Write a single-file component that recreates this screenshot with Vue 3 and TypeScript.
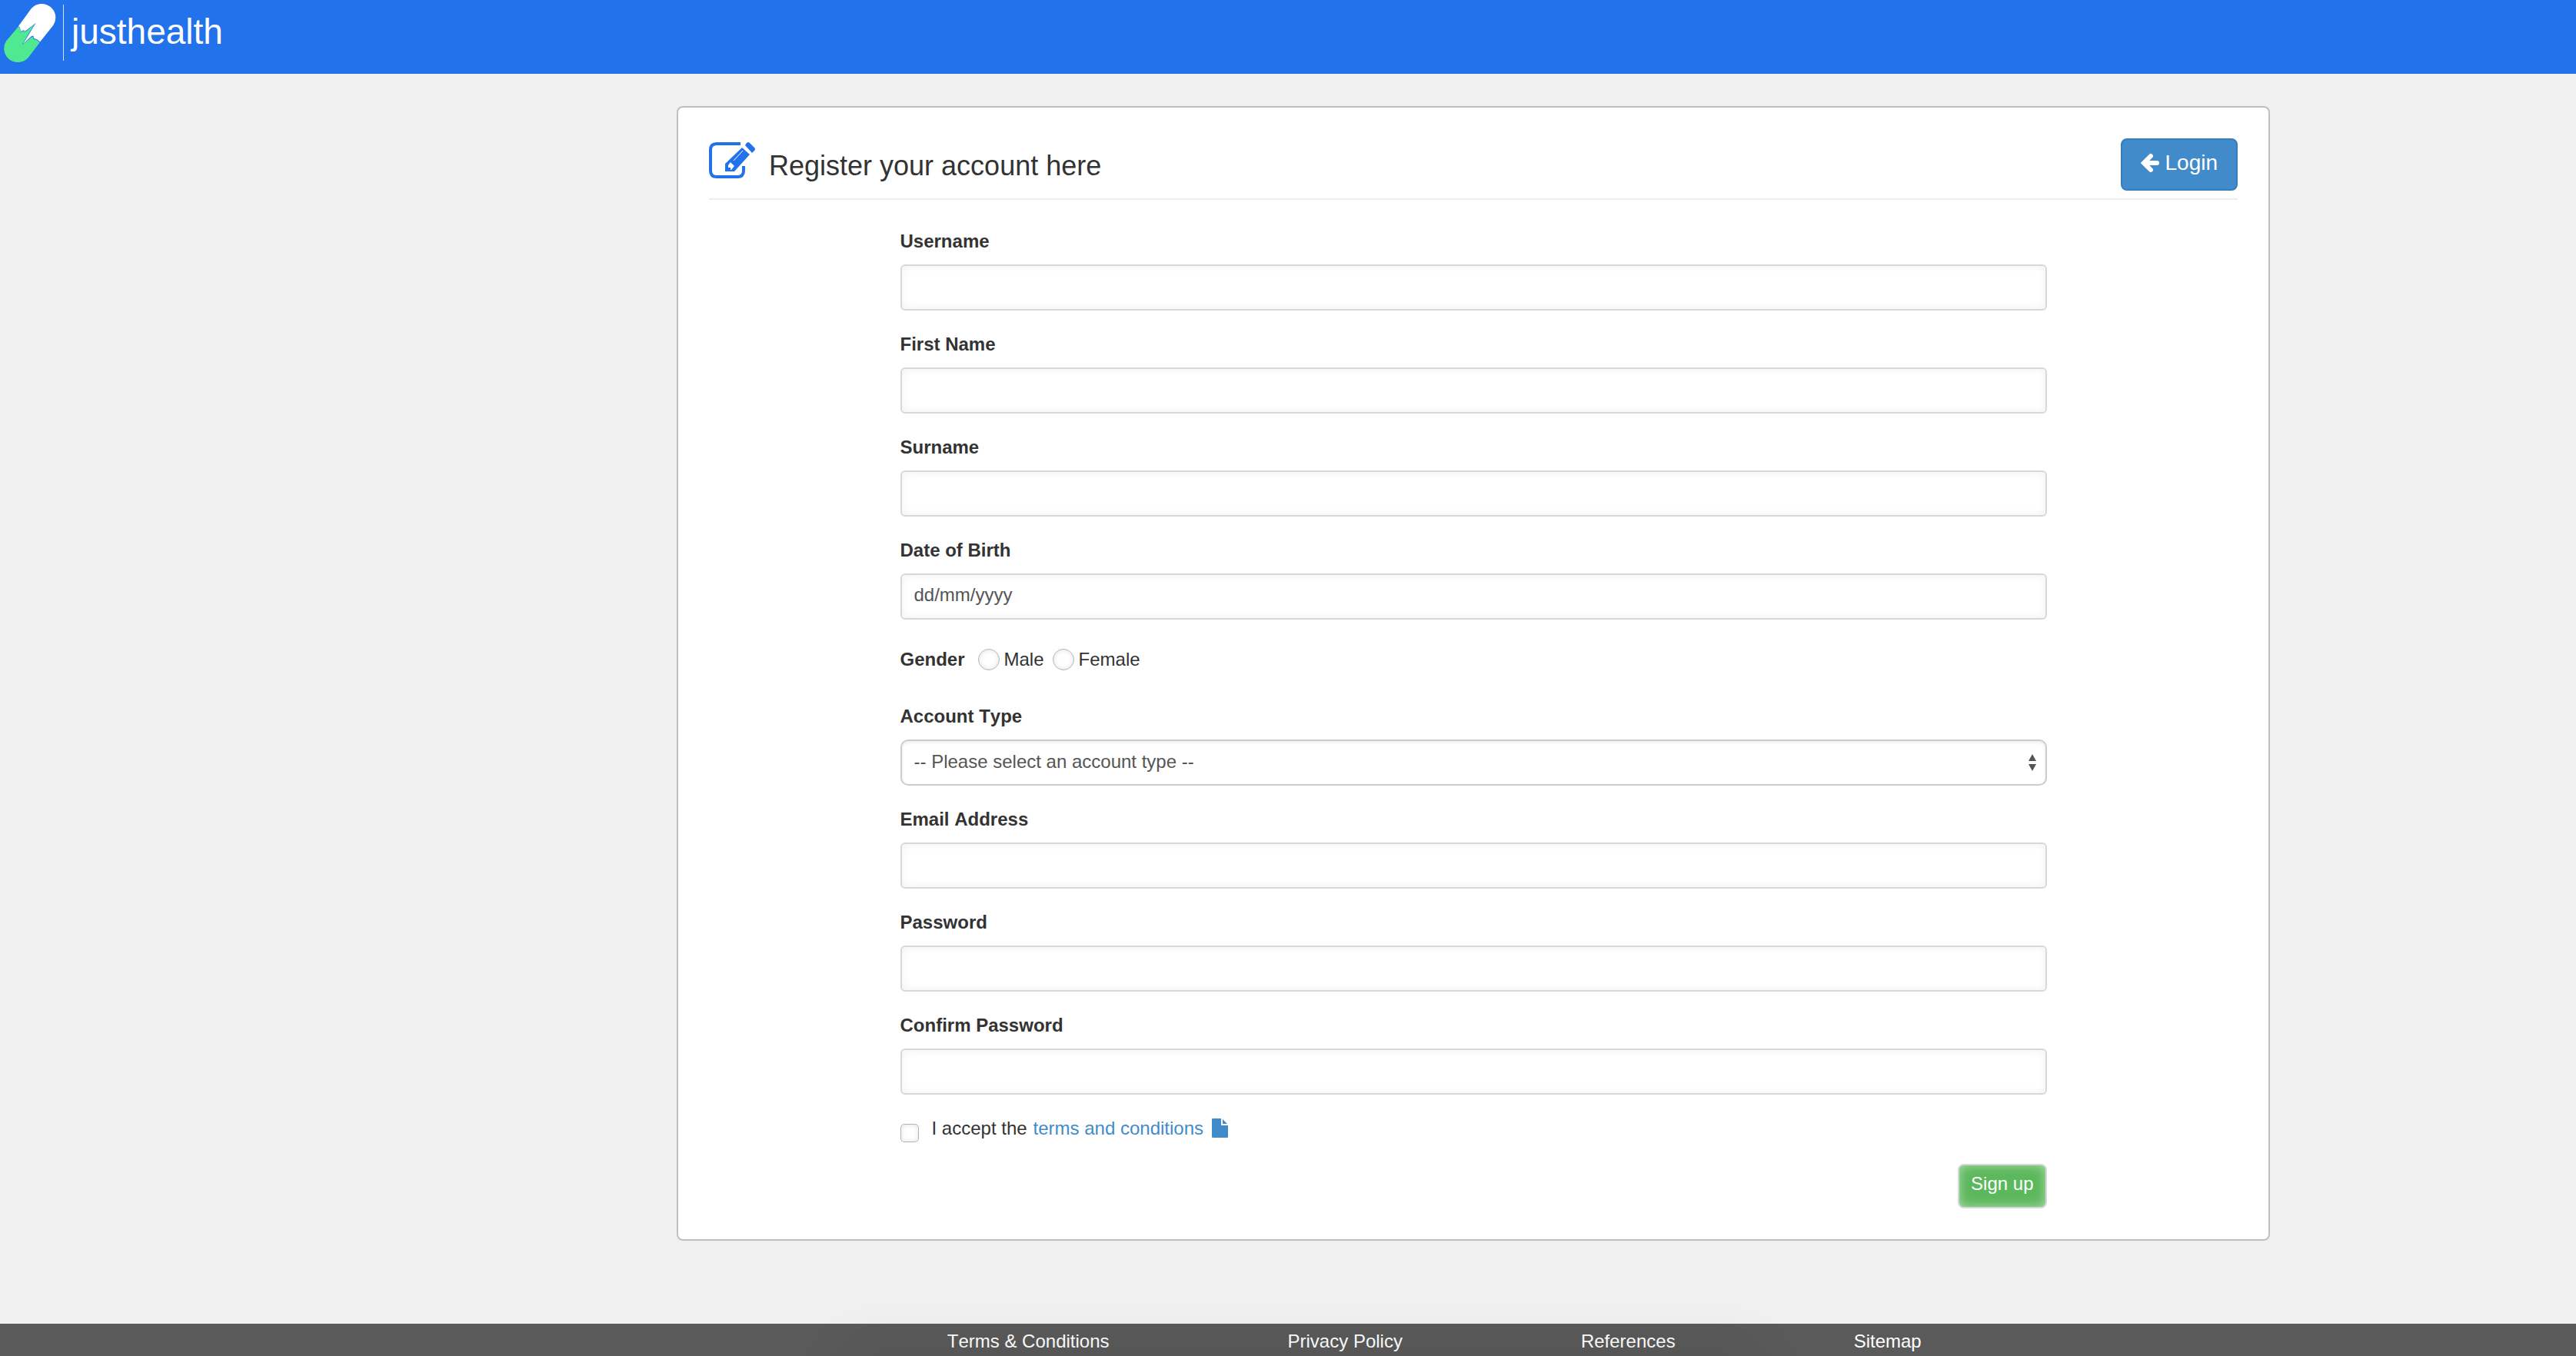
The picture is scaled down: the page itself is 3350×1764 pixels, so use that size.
<script setup lang="ts">
import { ref } from 'vue'

interface Field {
  id: string
  label: string
  type: string
  placeholder?: string
}

const personal: Field[] = [
  { id: 'username', label: 'Username', type: 'text' },
  { id: 'firstname', label: 'First Name', type: 'text' },
  { id: 'surname', label: 'Surname', type: 'text' },
  { id: 'dob', label: 'Date of Birth', type: 'text', placeholder: 'dd/mm/yyyy' },
]

const credentials: Field[] = [
  { id: 'email', label: 'Email Address', type: 'email' },
  { id: 'password', label: 'Password', type: 'password' },
  { id: 'confirm', label: 'Confirm Password', type: 'password' },
]

const footerLinks: string[] = ['Terms & Conditions', 'Privacy Policy', 'References', 'Sitemap']

const values = ref<Record<string, string>>({})
const gender = ref('')
const accountType = ref('')
const accepted = ref(false)
</script>

<template>
  <div class="page">
    <header class="topbar">
      <a class="brand" href="#">
        <svg class="pill" viewBox="0 0 74 86" aria-hidden="true">
          <path
            fill="#ffffff"
            d="M24 34 L40.800 11 A18 18 0 0 1 69.200 33 L52 54.500 L48 51 L44 50 L43.500 46.500 L41 47 L30 57 L38 44 L46.500 30 L36 38 L32 41 L31 39 L27 41 L26 36 Z"
          />
          <path
            fill="#50e991"
            d="M24 34.500 L26 37 L27 42 L31 40 L32 42 L36 39 L45 31.500 L37 44 L28.500 58.500 L41 48.500 L43 48 L43.500 51 L48 52 L51.500 55.500 L36.700 75 A18 18 0 0 1 8.300 53 Z"
          />
        </svg>
        <span class="divider"></span>
        <span class="brand-name">justhealth</span>
      </a>
    </header>

    <main class="content">
      <section class="panel">
        <div class="panel-head">
          <svg class="edit-icon" viewBox="0 0 60 48" aria-hidden="true">
            <path
              fill="none"
              stroke="#2272eb"
              stroke-width="4"
              d="M41 2 H10 Q2 2 2 10 V37 Q2 45 10 45 H37 Q45 45 45 37 V31"
            />
            <path fill="#2272eb" d="M43 7 L53 16 L33 38 H21 V28 Z" />
            <path fill="#2272eb" d="M47 4 L49 1 Q51 -1 53 1 L59 7 Q61 9 59 11 L56 14 Z" />
            <path fill="none" stroke="#ffffff" stroke-width="1" d="M32 24 L44 11" />
            <path fill="#ffffff" d="M28 26 L33 31 L29 36 H28 V33 H25 V30 Z" />
          </svg>
          <h1>Register your account here</h1>
          <a class="login" href="#login">
            <svg class="arrow" viewBox="0 0 24 26" aria-hidden="true">
              <path
                fill="none"
                stroke="#ffffff"
                stroke-width="6"
                stroke-linecap="round"
                d="M13 4 L4 13 L13 22 M5 13 H21"
              />
            </svg>
            Login
          </a>
        </div>

        <form class="form" @submit.prevent>
          <div v-for="field in personal" :key="field.id" class="group">
            <label :for="field.id">{{ field.label }}</label>
            <input
              :id="field.id"
              v-model="values[field.id]"
              class="control"
              :type="field.type"
              :placeholder="field.placeholder"
            />
          </div>

          <div class="gender" role="radiogroup" aria-labelledby="gender-label">
            <span id="gender-label" class="gender-title">Gender</span>
            <input id="male" v-model="gender" type="radio" name="gender" value="male" />
            <label for="male">Male</label>
            <input id="female" v-model="gender" type="radio" name="gender" value="female" />
            <label for="female">Female</label>
          </div>

          <div class="group">
            <label for="account">Account Type</label>
            <div class="select-wrap">
              <select id="account" v-model="accountType" class="control">
                <option value="">-- Please select an account type --</option>
                <option value="patient">Patient</option>
                <option value="carer">Carer</option>
              </select>
              <svg class="carets" viewBox="0 0 12 22" aria-hidden="true">
                <path fill="#555555" d="M6 0 L11 9 H1 Z M1 13 H11 L6 22 Z" />
              </svg>
            </div>
          </div>

          <div v-for="field in credentials" :key="field.id" class="group">
            <label :for="field.id">{{ field.label }}</label>
            <input :id="field.id" v-model="values[field.id]" class="control" :type="field.type" />
          </div>

          <div class="accept">
            <input id="terms" v-model="accepted" type="checkbox" />
            <label for="terms">I accept the</label>
            <a href="#terms">
              terms and conditions
              <svg class="file" viewBox="0 0 21 25" aria-hidden="true">
                <path
                  fill="#428bca"
                  d="M1 0 H12 V9 H21 V24 Q21 25 20 25 H1 Q0 25 0 24 V1 Q0 0 1 0 Z M14 1 L20 7 H14 Z"
                />
              </svg>
            </a>
          </div>

          <div class="actions">
            <button type="submit" class="signup">Sign up</button>
          </div>
        </form>
      </section>
    </main>

    <footer class="footer">
      <a v-for="link in footerLinks" :key="link" href="#">{{ link }}</a>
    </footer>
  </div>
</template>

<style>
body {
  margin: 0;
  background: #f0f0f0;
}
</style>

<style scoped>
.page {
  display: flex;
  flex-direction: column;
  min-height: 100vh;
  overflow: hidden;
  font-family: "Liberation Sans", Arial, sans-serif;
  font-size: 24px;
  font-kerning: none;
  line-height: 34px;
  color: #333333;
}

.page *,
.page {
  box-sizing: border-box;
}

a {
  color: #428bca;
  text-decoration: none;
}

.topbar {
  height: 96px;
  background: #2272eb;
}

.brand {
  display: inline-flex;
  align-items: flex-start;
  color: #ffffff;
}

.pill {
  width: 74px;
  height: 86px;
}

.divider {
  width: 1px;
  height: 73px;
  margin: 6px 10px 0 8px;
  background: #d3e3fb;
}

.brand-name {
  font-size: 46px;
  line-height: 82px;
}

.content {
  display: grid;
  flex: 1;
  grid-template-columns: 880fr 2072fr 398fr;
  align-items: start;
  padding: 42px 0 100px;
}

.panel {
  grid-column: 2;
  padding: 40px;
  background: #ffffff;
  border: 2px solid #bfbfbf;
  border-radius: 8px;
}

.panel-head {
  display: flex;
  align-items: flex-start;
  height: 80px;
  border-bottom: 2px solid #eeeeee;
}

.edit-icon {
  width: 60px;
  height: 48px;
  margin: 5px 18px 0 0;
}

h1 {
  flex: 1;
  margin: 16px 0 0;
  font-size: 36px;
  font-weight: 400;
  line-height: 40px;
}

.login {
  display: flex;
  align-items: center;
  height: 68px;
  padding: 0 24px 4px;
  font-size: 28px;
  color: #ffffff;
  background: #428bca;
  border: 2px solid #357ebd;
  border-radius: 8px;
}

.arrow {
  width: 24px;
  height: 26px;
  margin-right: 7px;
}

.form {
  width: 75%;
  margin: 0 auto;
  padding-top: 39px;
}

.group {
  display: flex;
  flex-direction: column;
  margin-bottom: 29px;
}

.group label {
  margin-bottom: 15px;
  font-weight: 700;
  line-height: 30px;
}

.control {
  display: block;
  width: 100%;
  height: 60px;
  padding: 0 16px 4px;
  font-family: inherit;
  font-size: 24px;
  font-kerning: none;
  color: #555555;
  background: #ffffff;
  border: 2px solid #d5d9d9;
  border-radius: 6px;
  outline: 0;
  box-shadow: inset 0 0 12px rgba(0, 0, 0, 0.06);
}

.control::placeholder {
  color: #555555;
  opacity: 1;
}

.select-wrap {
  position: relative;
}

select.control {
  appearance: none;
  border-color: #cccccc;
  border-radius: 10px;
  box-shadow: inset 0 2px 4px rgba(0, 0, 0, 0.08);
}

.carets {
  position: absolute;
  top: 19px;
  right: 13px;
  width: 12px;
  height: 22px;
  pointer-events: none;
}

.gender {
  display: flex;
  align-items: center;
  height: 34px;
  margin: 35px 0 42px;
}

.gender-title {
  font-weight: 700;
}

.gender input {
  width: 28px;
  height: 28px;
  margin: 0 6px 0 17px;
  appearance: none;
  background: #ffffff;
  border: 1px solid #b5b5b5;
  border-radius: 50%;
  box-shadow: inset 0 0 6px rgba(0, 0, 0, 0.12);
}

.gender label + input {
  margin-left: 11px;
}

.accept {
  display: flex;
  align-items: flex-start;
  height: 34px;
  line-height: 30px;
}

.accept input {
  width: 24px;
  height: 24px;
  margin: 9px 17px 0 0;
  appearance: none;
  background: #ffffff;
  border: 1px solid #b5b5b5;
  border-radius: 5px;
  box-shadow: inset 0 0 6px rgba(0, 0, 0, 0.12);
}

.accept a {
  display: flex;
  align-items: flex-start;
  margin-left: 8px;
}

.file {
  width: 21px;
  height: 25px;
  margin: 2px 0 0 11px;
}

.actions {
  display: flex;
  justify-content: flex-end;
  margin-top: 27px;
}

.signup {
  height: 58px;
  padding: 0 15px 6px;
  font-family: inherit;
  font-size: 24px;
  font-kerning: none;
  color: #ffffff;
  background: #5cb85c;
  border: 2px solid #d5d9d9;
  border-radius: 8px;
  box-shadow: inset 0 0 14px rgba(255, 255, 255, 0.5);
}

.footer {
  position: relative;
  display: flex;
  gap: 232px;
  height: 42px;
  padding: 6px 0 0 36.77%;
  background: #5a5a5a;
}

.footer::after {
  position: absolute;
  top: 100%;
  left: 33%;
  right: 32%;
  height: 60px;
  content: "";
  pointer-events: none;
  box-shadow: 0 0 80px rgba(0, 0, 0, 0.1);
}

.footer a {
  color: #ffffff;
  white-space: nowrap;
}
</style>
